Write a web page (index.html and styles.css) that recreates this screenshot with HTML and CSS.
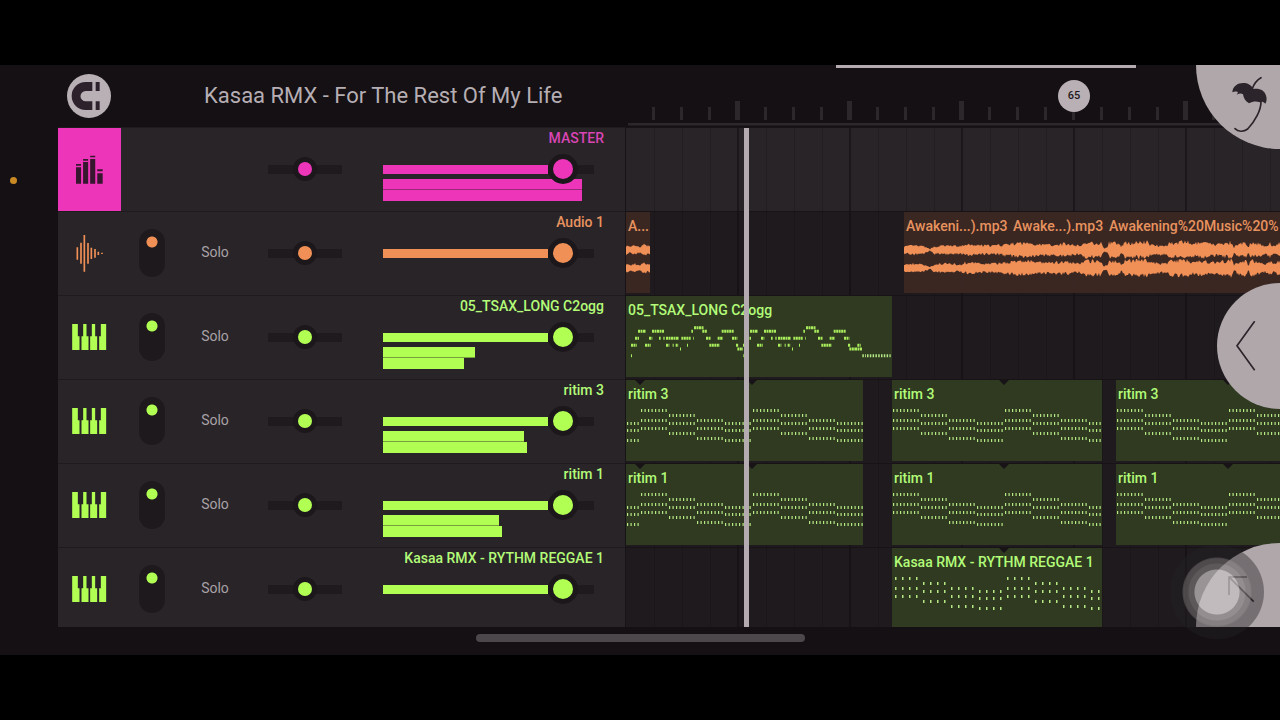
FILE: index.html
```html
<!DOCTYPE html>
<html lang="en">
<head>
<meta charset="utf-8">
<meta name="viewport" content="width=device-width, initial-scale=1">
<title>Kasaa RMX - For The Rest Of My Life</title>
<link rel="stylesheet" href="styles.css">
</head>
<body>
<svg class="defs" aria-hidden="true">
  <symbol id="piano" viewBox="0 0 104 78"><path fill="currentColor" d="M0 0H17V37H22V78H0ZM33 0H43V37H49V78H28V37H33ZM59 0H69V37H75V78H54V37H59ZM86 0H102V78H81V37H86Z"/></symbol>
</svg>
<div class="app">
  <header class="top">
    <div class="titlebar">
      <button class="snap" aria-label="Snap">
        <svg viewBox="203 42 130 132"><path fill="#2d222c" d="M278 66H258A42 42 0 0 0 258 150H278V124H258A15.500 15.500 0 0 1 258 93H278ZM288 66H300V93H288ZM288 124H300V150H288Z"/></svg>
      </button>
      <h1>Kasaa RMX - For The Rest Of My Life</h1>
    </div>
    <div class="ruler">
      <div class="scroll"></div>
      <svg id="ticks" class="ticks" aria-hidden="true"></svg>
      <span class="marker">65</span>
    </div>
  </header>

  <main class="board">
    <ul class="mixer">
      <li class="track master pink">
        <div class="kind"><svg width="27" height="29" viewBox="228 286 80 84"><path fill="#37162f" d="M228 321h15v49h-15zM228 312h15v5h-15zM249 306h15v64h-15zM249 297h15v5h-15zM270 297h15v73h-15zM270 287h15v5h-15zM291 339h16v31h-16zM291 327h16v6h-16z"/></svg></div>
        <span></span><span></span>
        <input class="pan" type="range" aria-label="MASTER pan">
        <div class="level"><label for="v0">MASTER</label><input class="vol" id="v0" type="range" value="89"><div class="meters"><i style="width:199px"></i><i style="width:199px"></i></div></div>
      </li>
      <li class="track orange">
        <div class="kind"><svg width="28" height="37" viewBox="74 76 84 111"><path stroke="currentColor" stroke-width="5" d="M78 113V150M89 99V162M99 76V186M110 100V162M120 114V148M131 118V144M141 126V136M152 129V133"/></svg></div>
        <input class="mute" type="checkbox" checked aria-label="Audio 1 on">
        <button class="solo">Solo</button>
        <input class="pan" type="range" aria-label="Audio 1 pan">
        <div class="level"><label for="v1">Audio 1</label><input class="vol" id="v1" type="range" value="89"></div>
      </li>
      <li class="track green">
        <div class="kind"><svg width="35" height="26"><use href="#piano"/></svg></div>
        <input class="mute" type="checkbox" checked aria-label="05_TSAX_LONG C2ogg on">
        <button class="solo">Solo</button>
        <input class="pan" type="range" aria-label="05_TSAX_LONG C2ogg pan">
        <div class="level"><label for="v2">05_TSAX_LONG C2ogg</label><input class="vol" id="v2" type="range" value="89"><div class="meters"><i style="width:92px"></i><i style="width:81px"></i></div></div>
      </li>
      <li class="track green">
        <div class="kind"><svg width="35" height="26"><use href="#piano"/></svg></div>
        <input class="mute" type="checkbox" checked aria-label="ritim 3 on">
        <button class="solo">Solo</button>
        <input class="pan" type="range" aria-label="ritim 3 pan">
        <div class="level"><label for="v3">ritim 3</label><input class="vol" id="v3" type="range" value="89"><div class="meters"><i style="width:141px"></i><i style="width:144px"></i></div></div>
      </li>
      <li class="track green">
        <div class="kind"><svg width="35" height="26"><use href="#piano"/></svg></div>
        <input class="mute" type="checkbox" checked aria-label="ritim 1 on">
        <button class="solo">Solo</button>
        <input class="pan" type="range" aria-label="ritim 1 pan">
        <div class="level"><label for="v4">ritim 1</label><input class="vol" id="v4" type="range" value="89"><div class="meters"><i style="width:116px"></i><i style="width:119px"></i></div></div>
      </li>
      <li class="track green">
        <div class="kind"><svg width="35" height="26"><use href="#piano"/></svg></div>
        <input class="mute" type="checkbox" checked aria-label="Kasaa RMX - RYTHM REGGAE 1 on">
        <button class="solo">Solo</button>
        <input class="pan" type="range" aria-label="Kasaa RMX - RYTHM REGGAE 1 pan">
        <div class="level"><label for="v5">Kasaa RMX - RYTHM REGGAE 1</label><input class="vol" id="v5" type="range" value="89"></div>
      </li>
    </ul>

    <div class="timeline">
      <div class="lane lane-master"></div>
      <div class="lane orange">
        <div class="clip" style="width:24px"><div class="names"><span>A...</span></div><svg data-wave="short"></svg></div>
        <div class="clip rest" style="margin-left:254px"><div class="names"><span style="width:107px">Awakeni...).mp3</span><span style="width:96px">Awake...).mp3</span><span>Awakening%20Music%20%</span></div><svg data-wave="long"></svg></div>
      </div>
      <div class="lane green">
        <div class="clip" style="width:266px"><div class="names"><span>05_TSAX_LONG C2ogg</span></div><svg data-notes="sax"></svg></div>
      </div>
      <div class="lane green">
        <div class="clip" style="width:237px"><div class="names"><span>ritim 3</span></div><svg data-notes="ritim" data-phase="98" data-bars="2"></svg></div>
        <div class="clip" style="width:210px;margin-left:29px"><div class="names"><span>ritim 3</span></div><svg data-notes="ritim"></svg></div>
        <div class="clip rest" style="margin-left:14px"><div class="names"><span>ritim 3</span></div><svg data-notes="ritim"></svg></div>
      </div>
      <div class="lane green">
        <div class="clip" style="width:237px"><div class="names"><span>ritim 1</span></div><svg data-notes="ritim" data-phase="98" data-bars="2"></svg></div>
        <div class="clip" style="width:210px;margin-left:29px"><div class="names"><span>ritim 1</span></div><svg data-notes="ritim"></svg></div>
        <div class="clip rest" style="margin-left:14px"><div class="names"><span>ritim 1</span></div><svg data-notes="ritim"></svg></div>
      </div>
      <div class="lane green">
        <div class="clip" style="width:210px;margin-left:266px"><div class="names"><span>Kasaa RMX - RYTHM REGGAE 1</span></div><svg data-notes="reggae"></svg></div>
      </div>
      <div class="playhead"></div>
    </div>
  </main>

  <footer class="bottom"><div class="home"></div></footer>

  <span class="status-dot"></span>
  <button class="corner corner-top" aria-label="Main menu">
    <svg viewBox="738 15 252 252" fill="none" stroke="#2b242a" stroke-width="5" stroke-linecap="round"><path fill="#2b242a" stroke="none" d="M847 97C848 77 866 67 884 69C898 71 906 79 910 87C927 84 945 90 949 110C951 118 949 127 946 131C940 125 934 124 929 127C918 123 908 125 897 130C886 124 881 114 879 103C874 99 868 100 860 104C863 99 865 96 862 95C857 94 852 94 847 97Z"/><path d="M907 86Q915 63 933 53M933 125C933 150 915 185 893 207C880 217 864 215 855 206"/></svg>
  </button>
  <button class="side" aria-label="Open panel">
    <svg viewBox="1011 249 189 378" fill="none" stroke="#2b242a" stroke-width="5"><path d="M1124 364L1071 437L1124 511"/></svg>
  </button>
  <button class="corner corner-bottom" aria-label="Expand">
    <svg viewBox="948 9 252 252" fill="none" stroke="#2b242a" stroke-width="5"><path d="M1047 165V111H1101M1049 113L1121 185"/></svg>
  </button>
  <span class="touch"></span>
</div>
<script src="draw.js"></script>
</body>
</html>
```
FILE: styles.css
```css
* { box-sizing: border-box; }

body {
  margin: 0;
  height: 100vh;
  padding: 65px 0;
  background: #000;
  font-family: Roboto, "Liberation Sans", sans-serif;
  font-size: 14px;
  overflow: hidden;
}

button { border: 0; padding: 0; background: none; font: inherit; color: inherit; }
svg { display: block; }
.defs { position: absolute; width: 0; height: 0; }

.pink { --tone: #ec35b9; --ink: #d945b5; }
.orange { --tone: #f19056; --ink: #e8935f; --clip: rgba(62, 41, 35, 0.9); }
.green { --tone: #b1ff53; --ink: #b3fb78; --clip: rgba(49, 61, 34, 0.94); }

.app {
  position: relative;
  display: flex;
  flex-direction: column;
  height: 100%;
  background: #141013;
  overflow: hidden;
}

/* Header */
.top { display: flex; flex: none; height: 62px; }
.titlebar {
  display: flex;
  align-items: center;
  flex: none;
  width: 626px;
  padding-left: 67px;
}
.snap {
  width: 44px;
  height: 44px;
  border-radius: 50%;
  background: #b9b0b5;
}
.snap svg { width: 44px; height: 44px; }
h1 {
  margin: 0 0 0 93px;
  font-size: 22px;
  font-weight: 400;
  line-height: 28px;
  color: #b6aeb3;
  white-space: nowrap;
}
.ruler { position: relative; flex: 1; overflow: hidden; }
.scroll { width: 300px; height: 3px; margin-left: 210px; background: #b3abb0; }
.ticks { width: 100%; height: 59px; }
.marker {
  position: absolute;
  left: 432px;
  top: 15px;
  width: 32px;
  height: 32px;
  border-radius: 50%;
  background: #b9b0b5;
  color: #1f191d;
  font-size: 11px;
  font-weight: 500;
  line-height: 32px;
  text-align: center;
}

/* Mixer */
.board { display: flex; flex: 1; min-height: 0; padding-left: 58px; overflow: hidden; }
.mixer { flex: none; width: 568px; margin: 0; padding: 0; list-style: none; border-right: 1px solid #171316; }
.track {
  display: grid;
  grid-template-columns: 63px 62px 64px 116px 1fr;
  align-items: center;
  justify-items: center;
  height: 84px;
  background: #292428;
  box-shadow: inset 0 1px #1e1a1d;
}
.kind { color: var(--tone); }
.master .kind {
  display: grid;
  place-items: center;
  width: 100%;
  height: 100%;
  border-top: 1px solid #1e1a1d;
  background: var(--tone);
}
.mute {
  appearance: none;
  width: 26px;
  height: 48px;
  margin: 0;
  border-radius: 13px;
  background: radial-gradient(circle at 13px 13px, var(--tone) 5px, transparent 6px) #1d191c;
}
.solo { height: 20px; margin-bottom: 2px; color: #a8a2a6; line-height: 20px; }
.pan, .vol { appearance: none; margin: 0; background: none; position: relative; z-index: 1; }
.pan { width: 74px; height: 20px; }
.vol { width: 211px; height: 20px; }
.pan::-webkit-slider-runnable-track { height: 9px; background: #1e1a1d; }
.vol::-webkit-slider-runnable-track {
  height: 9px;
  background: linear-gradient(90deg, var(--tone) 78%, #1e1a1d 78%);
}
.pan::-webkit-slider-thumb, .vol::-webkit-slider-thumb {
  appearance: none;
  border-radius: 50%;
  background: var(--tone);
  box-shadow: 0 0 0 5px #1c171b;
}
.pan::-webkit-slider-thumb { width: 14px; height: 14px; margin-top: -3px; }
.vol::-webkit-slider-thumb { width: 20px; height: 20px; margin-top: -6px; }
.level {
  display: flex;
  flex-direction: column;
  align-self: start;
  width: 100%;
  padding-left: 20px;
}
.level label {
  margin: 0 21px 10px 0;
  font-weight: 500;
  line-height: 22px;
  text-align: right;
  color: var(--ink);
  white-space: nowrap;
}
.meters i { display: block; height: 11px; background: var(--tone); }
.meters i:first-child { box-shadow: inset 0 -1px rgba(30, 20, 28, 0.4); }

/* Timeline */
.timeline { position: relative; flex: 1; min-width: 0; overflow: hidden; }
.lane {
  --bar: #161215;
  --beat: #1a161a;
  --floor: #1e1a1d;
  display: flex;
  height: 84px;
  border-top: 1px solid #171316;
  background:
    repeating-linear-gradient(90deg, transparent 0 110px, var(--bar) 110px 112px),
    repeating-linear-gradient(90deg, transparent 0 27px, var(--beat) 27px 28px),
    var(--floor);
  background-position: 1px 0;
}
.lane-master {
  --bar: #1b171a;
  --beat: #221d21;
  --floor: #292428;
}
.clip { flex: none; height: 81px; background: var(--clip); color: var(--tone); overflow: hidden; }
.clip.rest { flex: 1; min-width: 0; }
.clip svg { width: 100%; height: 81px; margin-top: -29px; }
.names {
  display: flex;
  height: 29px;
  padding-left: 2px;
  font-weight: 500;
  line-height: 29px;
  color: var(--ink);
  white-space: nowrap;
}
.names span { flex: none; }
.playhead { position: absolute; left: 118px; top: 1px; bottom: 0; width: 5px; background: #b3abb0; }

/* Footer */
.bottom { display: flex; justify-content: center; flex: none; height: 28px; padding-top: 7px; }
.home { width: 329px; height: 8px; border-radius: 4px; background: #4b474a; }

/* Overlays */
.status-dot {
  position: absolute;
  left: 10px;
  top: 112px;
  width: 7px;
  height: 7px;
  border-radius: 50%;
  background: #c98a26;
}
.corner, .side { position: absolute; right: 0; background: #b0a7ab; }
.corner { width: 84px; height: 84px; }
.corner svg, .side svg { width: 100%; height: 100%; }
.corner-top { top: 0; border-radius: 0 0 0 100%; }
.corner-bottom { bottom: 28px; border-radius: 100% 0 0 0; }
.side { top: 218px; width: 63px; height: 126px; border-radius: 63px 0 0 63px; }
.touch {
  position: absolute;
  right: 16px;
  bottom: 16px;
  width: 94px;
  height: 94px;
  border-radius: 50%;
  background: radial-gradient(circle closest-side,
    rgba(200, 194, 197, 0.72) 22px, rgba(130, 126, 128, 0.62) 23px 28px,
    rgba(108, 104, 106, 0.62) 29px 33px, rgba(96, 93, 95, 0.6) 34px,
    rgba(36, 34, 37, 0.42) 35px);
}
```
FILE: draw.js
```js
const NS = 'http://www.w3.org/2000/svg';

function path(svg, d, attrs) {
  const p = document.createElementNS(NS, 'path');
  p.setAttribute('d', d);
  for (const k in attrs) p.setAttribute(k, attrs[k]);
  svg.appendChild(p);
}

// Ruler: a tick per beat, a taller one per bar
const ticks = document.getElementById('ticks');
let ruler = 'M2 55H3000V57.500H2Z';
for (let i = 1; i < 100; i++) {
  const x = i * 28;
  ruler += i % 4 === 0 && i !== 16 ? `M${x - 3} 33h5v19h-5z` : `M${x - 2} 39h3v13h-3z`;
}
path(ticks, ruler, { fill: '#2b272b' });

// Note patterns: four chords of one beat each, repeated every bar
const chords = [[30.5, 40.5, 48.5], [35.5, 43.5, 53.5], [40.5, 48.5, 58.5], [43.5, 50.5, 60.5]];

function chordNotes(svg, phase, step, lead, w, h) {
  const n = Math.floor(28 / step);
  const loops = +(svg.dataset.bars || 12);
  let d = '', notches = '';
  for (let bar = 0; bar < 12; bar++) {
    const start = bar * 112 - phase;
    if (start > 0 && bar <= loops) notches += `M${start - 5} 0h10l-5 5z`;
    chords.forEach((ys, c) => ys.forEach(y => {
      for (let i = 0; i < n; i++) {
        const x = start + c * 28 + lead + i * step;
        if (x >= 0) d += `M${x} ${y - h / 2}h${w}v${h}h${-w}z`;
      }
    }));
  }
  path(svg, d, { fill: '#b5e884' });
  path(svg, notches, { fill: '#171316' });
}

// Melody: [y, start, end, start, end, ...] at three units to the pixel
const melody = [
  [113, 222, 251],
  [124, 54, 78, 96, 133, 214, 219, 247, 262, 305, 342],
  [145, 45, 57, 87, 97, 117, 122, 130, 134, 138, 177, 184, 212, 220, 222, 258, 273, 293, 309, 336, 352],
  [166, 33, 50, 75, 92, 138, 148, 158, 161, 167, 175, 201, 204, 268, 299, 348, 356],
  [177, 180, 183, 352, 369],
  [197, 33, 36]
];

function saxNotes(svg) {
  const line = (x1, x2, y) => `M${(x1 - 18) / 3} ${(y - 18) / 3}H${(x2 - 18) / 3}`;
  let d = '';
  [0, 336].forEach(shift => melody.forEach(([y, ...xs]) => {
    if (shift && y === 197) return;
    for (let i = 0; i < xs.length; i += 2) d += line(xs[i] + shift, xs[i + 1] + shift, y);
  }));
  d += line(370, 373, 197) + line(712, 722, 166) + line(705, 727, 177);
  path(svg, d, { stroke: '#a9ec5c', 'stroke-width': 3, 'stroke-dasharray': '2 0.5' });
  path(svg, line(727, 738, 197) + line(741, 812, 197), { stroke: '#b5e884', 'stroke-width': 3, 'stroke-dasharray': '1.500 1.300' });
}

// Envelope points: [x, half height]
const envelopes = {
  short: [[0, 5], [5, 3], [8, 5], [14, 3], [18, 6], [24, 4]],
  long: [[0, 4], [10, 5], [20, 4], [26, 1], [30, 4], [45, 5], [57, 4], [60, 6], [78, 5], [92, 5], [100, 6], [106, 7], [128, 8],
    [134, 6], [150, 6], [160, 7], [174, 5], [182, 8], [197, 8], [200, 2], [203, 3], [205, 8], [215, 8], [217, 3], [220, 8],
    [243, 9], [246, 6], [262, 5], [266, 8], [284, 9], [287, 7], [300, 8], [312, 6], [328, 9], [330, 3], [334, 7], [342, 8],
    [344, 3], [347, 8], [357, 7], [361, 4], [366, 8], [369, 4], [376, 8], [386, 5], [396, 8], [700, 8]]
};

function wave(svg, points) {
  let seed = 7, k = 0;
  const rand = () => (seed = (seed * 16807) % 2147483647) / 2147483647;
  const end = points[points.length - 1][0];
  const up = [[], []], down = [[], []];
  for (let x = 0; x <= end; x += 1) {
    while (points[k + 1][0] < x) k++;
    const [x0, a0] = points[k], [x1, a1] = points[k + 1];
    const amp = a0 + (a1 - a0) * (x - x0) / (x1 - x0);
    [38, 56].forEach((mid, c) => {
      up[c].push(`${x} ${(mid - amp * (0.6 + rand() * 0.5)).toFixed(1)}`);
      down[c].unshift(`${x} ${(mid + amp * (0.6 + rand() * 0.5)).toFixed(1)}`);
    });
  }
  up.forEach((u, c) => path(svg, 'M' + u.join('L') + 'L' + down[c].join('L') + 'Z', { fill: '#f19056' }));
}

document.querySelectorAll('[data-wave]').forEach(svg => wave(svg, envelopes[svg.dataset.wave]));
document.querySelectorAll('[data-notes]').forEach(svg => {
  const kind = svg.dataset.notes;
  if (kind === 'sax') saxNotes(svg);
  else if (kind === 'ritim') chordNotes(svg, +(svg.dataset.phase || 0), 3.5, 1, 1.2, 3);
  else chordNotes(svg, 0, 7, 3, 1.5, 3);
});
```
